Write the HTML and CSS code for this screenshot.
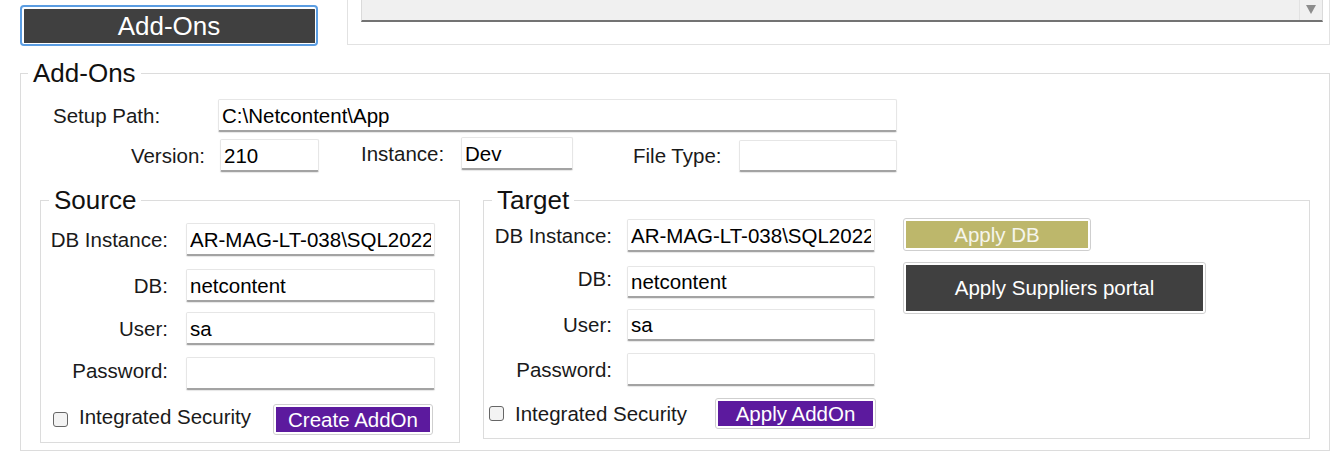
FILE: index.html
```html
<!DOCTYPE html>
<html>
<head>
<meta charset="utf-8">
<title>Add-Ons</title>
<link rel="stylesheet" href="styles.css">
</head>
<body>
<div class="topbar">
  <button class="tab-btn">Add-Ons</button>
  <div class="top-panel">
    <div class="combo">
      <span class="combo-arrow"><svg width="10" height="9" viewBox="0 0 10 9"><path d="M0 0H10L5 9Z" fill="#8c8c8c"/></svg></span>
    </div>
  </div>
</div>

<fieldset class="group main">
  <legend>Add-Ons</legend>
  <div class="main-body">
    <div class="setup-row">
      <span class="lbl">Setup Path:</span>
      <input class="tb w-setup" type="text" value="C:\Netcontent\App">
    </div>
    <div class="meta-row">
      <div class="field f-version">
        <span class="lbl">Version:</span>
        <input class="tb" type="text" value="210">
      </div>
      <div class="field f-instance">
        <span class="lbl">Instance:</span>
        <input class="tb" type="text" value="Dev">
      </div>
      <div class="field f-filetype">
        <span class="lbl">File Type:</span>
        <input class="tb" type="text" value="">
      </div>
    </div>

    <div class="panels">
      <fieldset class="group source">
        <legend>Source</legend>
        <div class="src-body">
          <div class="frow">
            <span class="lbl">DB Instance:</span>
            <input class="tb" type="text" value="AR-MAG-LT-038\SQL2022">
          </div>
          <div class="frow mt13">
            <span class="lbl">DB:</span>
            <input class="tb" type="text" value="netcontent">
          </div>
          <div class="frow mt10">
            <span class="lbl">User:</span>
            <input class="tb" type="text" value="sa">
          </div>
          <div class="frow mt12">
            <span class="lbl up">Password:</span>
            <input class="tb" type="text" value="">
          </div>
          <div class="check-row mt14">
            <span class="chk"></span>
            <span class="chk-lbl up">Integrated Security</span>
            <button class="act purple">Create AddOn</button>
          </div>
        </div>
      </fieldset>

      <fieldset class="group target">
        <legend>Target</legend>
        <div class="tgt-body">
          <div class="tgt-form">
            <div class="frow">
              <span class="lbl">DB Instance:</span>
              <input class="tb" type="text" value="AR-MAG-LT-038\SQL2022">
            </div>
            <div class="frow mt14 h32">
              <span class="lbl up">DB:</span>
              <input class="tb" type="text" value="netcontent">
            </div>
            <div class="frow mt11 h32">
              <span class="lbl">User:</span>
              <input class="tb" type="text" value="sa">
            </div>
            <div class="frow mt12">
              <span class="lbl">Password:</span>
              <input class="tb" type="text" value="">
            </div>
            <div class="check-row mt12">
              <span class="chk"></span>
              <span class="chk-lbl">Integrated Security</span>
              <button class="act purple">Apply AddOn</button>
            </div>
          </div>
          <div class="tgt-actions">
            <button class="act olive">Apply DB</button>
            <button class="act dark">Apply Suppliers portal</button>
          </div>
        </div>
      </fieldset>
    </div>
  </div>
</fieldset>
</body>
</html>
```

FILE: styles.css
```css
* { box-sizing: border-box; }

body {
  margin: 0;
  background: #fff;
  font-family: "Liberation Sans", Arial, sans-serif;
  font-size: 20.5px;
  color: #1a1a1a;
}

/* ---------- top bar ---------- */
.topbar {
  display: flex;
  align-items: flex-start;
  height: 46px;
}

.tab-btn {
  margin: 5px 0 0 20px;
  width: 298px;
  height: 41px;
  border: 2px solid #5b9de2;
  border-radius: 4px;
  padding: 1.5px;
  background: #404040;
  background-clip: content-box;
  color: #fff;
  font: 26px/1 "Liberation Sans", Arial, sans-serif;
  display: flex;
  align-items: center;
  justify-content: center;
}

.top-panel {
  flex: 1;
  margin: -10px 4px 0 29px;
  height: 55px;
  border: 1px solid #e2e2e2;
  padding: 0 6px 0 13px;
}

.combo {
  height: 31px;
  background: #f0f0f0;
  border: 1px solid #dadada;
  border-bottom: 2px solid #737373;
  display: flex;
  justify-content: flex-end;
}

.combo-arrow {
  width: 23px;
  border-left: 1px solid #e2e2e2;
  display: flex;
  align-items: flex-end;
  justify-content: center;
  padding-bottom: 6px;
}

.combo-arrow svg { display: block; }

/* ---------- group boxes ---------- */
fieldset.group {
  border: 1px solid #dcdcdc;
  margin: 0;
  padding: 0;
  min-width: 0;
}

fieldset.group > legend {
  font-size: 26px;
  line-height: 30px;
  padding: 0 5px;
  margin-left: 8px;
  color: #111;
}

fieldset.main {
  margin: 12px 4px 0 20px;
}

fieldset.main > legend { margin-left: 7px; }

.main-body {
  padding: 11px 0 7px;
}

.lbl { white-space: nowrap; }
.up { margin-bottom: 6px; }

/* ---------- text boxes ---------- */
.tb {
  font: inherit;
  color: #000;
  height: 33px;
  margin: 0;
  padding: 1px 3px 0;
  background: #fff;
  border: 1px solid #e6e6e6;
  border-bottom: 2px solid #a3a3a3;
  border-radius: 2px;
  box-shadow: 0 1px 1px rgba(0, 0, 0, 0.1);
  outline: none;
}

.setup-row {
  display: flex;
  align-items: center;
  padding-left: 32px;
}

.setup-row .lbl { width: 165px; }
.w-setup { width: 679px; }

.meta-row {
  display: flex;
  align-items: flex-start;
  margin-top: 5px;
}

.field {
  display: flex;
  align-items: center;
}

.field .tb { margin-left: 15px; }

.f-version { margin-top: 2px; }
.f-version .lbl { width: 184px; text-align: right; }
.f-version .tb { width: 99px; }

.f-instance { margin-left: 42px; }
.f-instance .lbl { width: 85px; }
.f-instance .tb { width: 112px; }

.f-filetype { margin-left: 60px; margin-top: 3px; }
.f-filetype .lbl { width: 91px; }
.f-filetype .tb { width: 158px; height: 32px; }

/* ---------- source / target ---------- */
.panels {
  display: flex;
  align-items: flex-start;
  gap: 23px;
  margin: 13px 0 0 19px;
}

fieldset.source { width: 420px; }
fieldset.target { width: 827px; }

.frow {
  display: flex;
  align-items: center;
  height: 33px;
}

.frow.h32 { height: 32px; }
.frow.h32 .tb { height: 32px; }

.mt10 { margin-top: 10px; }
.mt11 { margin-top: 11px; }
.mt12 { margin-top: 12px; }
.mt13 { margin-top: 13px; }
.mt14 { margin-top: 14px; }

.src-body {
  padding: 8px 24px 7px 0;
}

.src-body .lbl { width: 127px; text-align: right; }
.src-body .tb { margin-left: 18px; width: 249px; }

.tgt-body {
  display: flex;
  align-items: flex-start;
}

.tgt-form {
  width: 391px;
  padding: 4px 0 9px;
}

.tgt-form .lbl { width: 128px; text-align: right; }
.tgt-form .tb { margin-left: 15px; width: 248px; }

.check-row {
  display: flex;
  align-items: center;
  height: 31px;
}

.chk {
  width: 15px;
  height: 15px;
  border: 1.5px solid #666;
  border-radius: 3px;
  background: #f3f3f3;
  margin-left: 12px;
}

.tgt-form .chk { margin-left: 5px; }

.chk-lbl {
  margin-left: 11px;
  white-space: nowrap;
}

/* ---------- buttons ---------- */
.act {
  font: inherit;
  color: #fff;
  margin: 0;
  height: 31px;
  border: 1px solid #cfcfcf;
  border-radius: 3px;
  padding: 2px;
  background-clip: content-box;
  display: flex;
  align-items: center;
  justify-content: center;
  white-space: nowrap;
}

.check-row .act { margin-left: auto; }

.purple {
  background-color: #5c1a9e;
  width: 160px;
  margin-right: 2px;
}

.tgt-form .purple {
  width: 161px;
  margin-right: -1px;
}

.tgt-actions {
  margin-left: 28px;
  padding-top: 3px;
  display: flex;
  flex-direction: column;
  align-items: flex-start;
}

.olive {
  width: 188px;
  height: 33px;
  background-color: #bdb76b;
  color: #f5f5ec;
}

.dark {
  width: 303px;
  height: 52px;
  margin-top: 11px;
  background-color: #404040;
}
```
